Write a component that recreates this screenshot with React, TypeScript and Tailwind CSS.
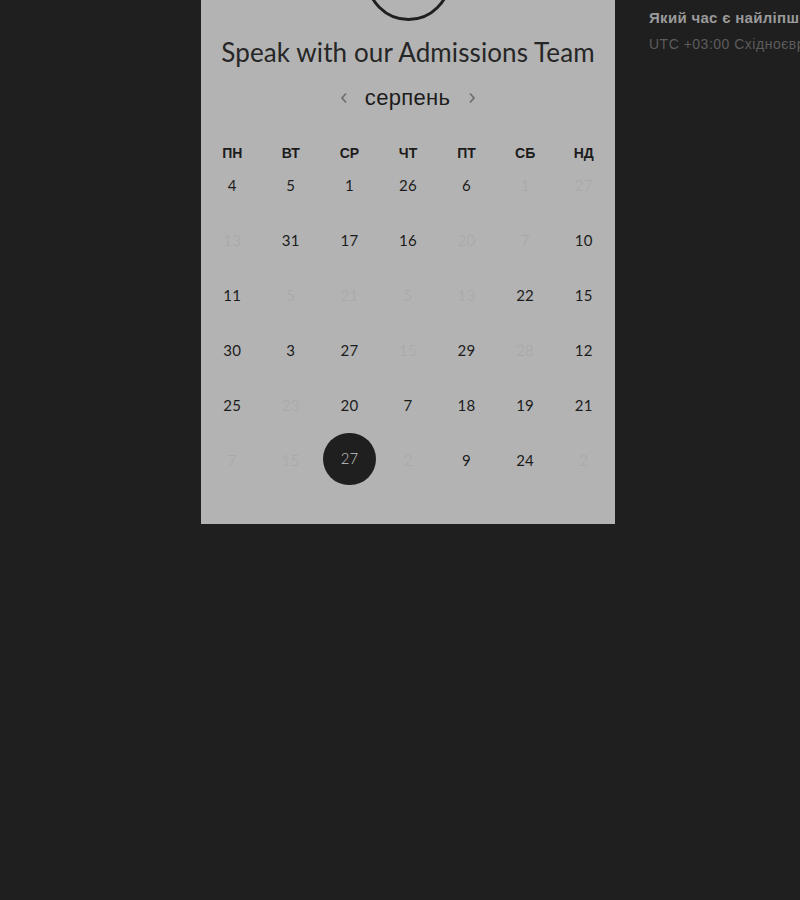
import React from 'react';

const WEEKDAYS = ['ПН', 'ВТ', 'СР', 'ЧТ', 'ПТ', 'СБ', 'НД'];

// [day, muted, selected]
const ROWS: [number, boolean?, boolean?][][] = [
  [[4], [5], [1], [26], [6], [1, true], [27, true]],
  [[13, true], [31], [17], [16], [20, true], [7, true], [10]],
  [[11], [5, true], [21, true], [5, true], [13, true], [22], [15]],
  [[30], [3], [27], [15, true], [29], [28, true], [12]],
  [[25], [23, true], [20], [7], [18], [19], [21]],
  [[7, true], [15, true], [27, false, true], [2, true], [9], [24], [2, true]],
];

export default function App() {
  return (
    <div className="w-[800px] h-[900px] bg-[#1f1f1f] overflow-hidden flex items-start">
      {/* Booking panel */}
      <div className="ml-[201px] w-[414px] shrink-0 h-[524px] bg-[#b3b3b3] flex flex-col items-center overflow-hidden">
        <div className="w-[85px] h-[85px] -mt-[64px] rounded-full border-[3px] border-[#1f1f1f] shrink-0" />

        <h1
          className="mt-[16px] h-[30px] text-[26px] leading-[30px] text-[#262626] tracking-[0.1px] whitespace-nowrap"
          style={{ fontFamily: 'Lato, "Open Sans", sans-serif' }}
        >
          Speak with our Admissions Team
        </h1>

        <div className="mt-[16px] flex items-center h-[30px]">
          <svg width="10" height="14" viewBox="0 0 10 14" className="mr-[16px]">
            <path d="M7 2.5 L3 7 L7 11.5" fill="none" stroke="#6b6b6b" strokeWidth="1.6" />
          </svg>
          <span
            className="text-[22px] leading-[30px] text-[#1c1c1c] tracking-[0.3px]"
            style={{ fontFamily: '"Liberation Sans", Arial, sans-serif' }}
          >
            серпень
          </span>
          <svg width="10" height="14" viewBox="0 0 10 14" className="ml-[17px]">
            <path d="M3 2.5 L7 7 L3 11.5" fill="none" stroke="#6b6b6b" strokeWidth="1.6" />
          </svg>
        </div>

        {/* Calendar grid */}
        <div className="mt-[30px] w-full px-[2px]">
          <div
            className="grid grid-cols-7 h-[20px] items-center text-[14px] leading-[20px] font-bold text-[#1c1c1c]"
            style={{ fontFamily: '"Liberation Sans", Arial, sans-serif' }}
          >
            {WEEKDAYS.map((d) => (
              <div key={d} className="text-center">
                {d}
              </div>
            ))}
          </div>
          <div className="-mt-[6px]" style={{ fontFamily: 'Lato, "Open Sans", sans-serif' }}>
            {ROWS.map((row, ri) => (
              <div key={ri} className="grid grid-cols-7 h-[55px]">
                {row.map(([n, muted, selected], ci) => (
                  <div key={ci} className="flex items-center justify-center">
                    {selected ? (
                      <div className="w-[53px] h-[52px] rounded-full bg-[#1f1f1f] flex items-center justify-center text-[15px] text-[#c4c4c4] font-light -mt-[2px]">
                        {n}
                      </div>
                    ) : (
                      <span
                        className={`text-[15px] leading-[20px] tracking-[0.3px] ${muted ? 'text-[#a6a6a6] font-light' : 'text-[#1c1c1c]'}`}
                      >
                        {n}
                      </span>
                    )}
                  </div>
                ))}
              </div>
            ))}
          </div>
        </div>
      </div>

      {/* Side text */}
      <div
        className="ml-[34px] mt-[8px] whitespace-nowrap"
        style={{ fontFamily: '"Liberation Sans", Arial, sans-serif' }}
      >
        <div className="text-[15px] leading-[20px] font-bold text-[#9a9a9a] tracking-[0.3px]">
          Який час є найліпший для вас?
        </div>
        <div className="mt-[6px] text-[14px] leading-[20px] text-[#5c5c5c] tracking-[0.5px]">
          UTC +03:00 Східноєвропейський час
        </div>
      </div>
    </div>
  );
}
